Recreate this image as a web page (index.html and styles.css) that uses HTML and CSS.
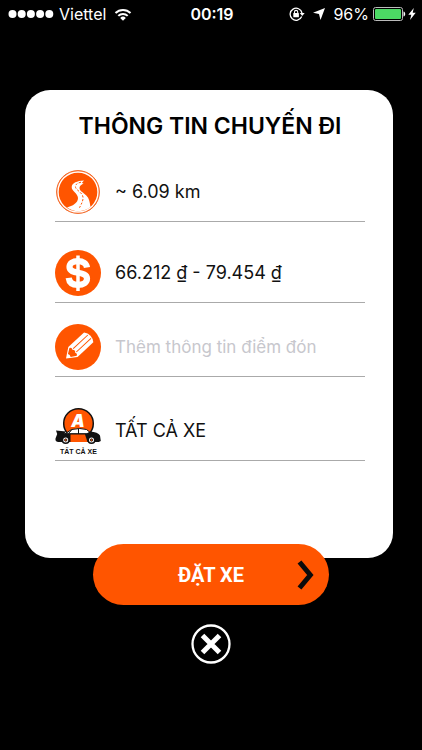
FILE: index.html
```html
<!DOCTYPE html>
<html lang="vi">
<head>
<meta charset="utf-8">
<meta name="viewport" content="width=device-width, initial-scale=1">
<title>Thông tin chuyến đi</title>
<link rel="stylesheet" href="styles.css">
</head>
<body>
<header class="status">
  <div class="status-side">
    <svg width="46" height="10" viewBox="0 0 46 10" fill="#fff" aria-hidden="true"><circle cx="4.500" cy="5" r="4"/><circle cx="13.700" cy="5" r="4"/><circle cx="22.900" cy="5" r="4"/><circle cx="32.100" cy="5" r="4"/><circle cx="41.300" cy="5" r="4"/></svg>
    <span class="carrier">Viettel</span>
    <svg class="wifi" width="18" height="13" viewBox="0 0 18 13" fill="none" stroke="#fff" stroke-width="2" aria-hidden="true"><path d="M1.500 5a10.600 10.600 0 0 1 15 0M4.300 7.900a6.600 6.600 0 0 1 9.400 0"/><path fill="#fff" stroke="none" d="M6.200 9.900a4 4 0 0 1 5.600 0L9 12.700z"/></svg>
  </div>
  <time class="clock">00:19</time>
  <div class="status-side status-right">
    <svg width="16" height="14" viewBox="0 0 16 14" aria-hidden="true"><path d="M12.700 9.500A6 6 0 1 1 13 6" fill="none" stroke="#fff" stroke-width="1.300"/><path d="M10.700 6h5L13.200 9z" fill="#fff"/><rect x="4.300" y="6" width="5.600" height="4.200" rx=".5" fill="#fff"/><path d="M5.500 6.300V5a1.600 1.600 0 0 1 3.200 0v1.300" fill="none" stroke="#fff" stroke-width="1.100"/></svg>
    <svg class="locate" width="12" height="12" viewBox="0 0 12 12" fill="#fff" aria-hidden="true"><path d="M12 0 7.500 12 6 6 0 4.800z"/></svg>
    <span class="percent">96%</span>
    <svg width="33" height="14" viewBox="0 0 33 14" aria-hidden="true"><rect x=".5" y=".5" width="29" height="13" rx="2" fill="#000" stroke="#bbb"/><rect x="2" y="2" width="26" height="10" rx="1" fill="#4cd964"/><path d="M30.500 4.500c2.300.5 2.300 4.500 0 5z" fill="#fff"/></svg>
    <svg class="bolt" width="8" height="12" viewBox="0 0 8 12" fill="#fff" aria-hidden="true"><path d="M5.800 0 .3 6.800h3L2 12l5.700-7.200h-3z"/></svg>
  </div>
</header>

<main class="page">
  <section class="card">
    <h1 class="title">THÔNG TIN CHUYẾN ĐI</h1>

    <div class="row">
      <svg class="icon" viewBox="0 0 46 46" aria-hidden="true">
        <circle cx="23" cy="23" r="21.400" fill="#ff5500" stroke="#f26a2c" stroke-width="1"/>
        <circle cx="23" cy="23" r="20" fill="none" stroke="#fff" stroke-width="1.400"/>
        <path fill="#fff" d="M29 11.500c-7 .3-12 2.500-12.300 6.500-.3 4 6.300 6.500 6.300 11 0 5-5.500 8-11 9.500A19.500 19.500 0 0 0 35.500 38c-.8-5-1.200-8.500-4.200-11.500-3-3-6.800-4.500-6.800-7.500 0-2.500 2.500-3.300 4-4.500l-1.700-.5z"/>
        <path fill="none" stroke="#ff5500" stroke-width="1" stroke-dasharray="2.200 1.600" d="M26 13.200c-3.500.8-6 2.300-5.500 5 .6 3 7 5.300 7.500 10 .3 3.300-1.200 6-3.500 10.500"/>
      </svg>
      <span class="value">~ 6.09 km</span>
    </div>

    <div class="row row-price">
      <svg class="icon" viewBox="0 0 46 46" aria-hidden="true">
        <circle cx="23" cy="23" r="23" fill="#ff5500"/>
        <path fill="none" stroke="#fff" stroke-width="6.200" d="M32 17.500c-.6-4-4-6.300-9-6.300-5.500 0-8.500 2.300-8.500 5.900 0 8 17.500 3.400 17.500 11.400 0 4-3.500 6.300-9 6.300s-8.800-2.600-9.300-7"/>
        <path stroke="#fff" stroke-width="3.500" d="M23 5.500v35.500"/>
      </svg>
      <span class="value">66.212 ₫ - 79.454 ₫</span>
    </div>

    <label class="row row-note">
      <svg class="icon" viewBox="0 0 46 46" aria-hidden="true">
        <circle cx="23" cy="23" r="23" fill="#ff5500"/>
        <g transform="translate(11 34.500) rotate(-43)">
          <path fill="#fff" d="M0 0 9.500-6.800H31q2.500 3 2.500 6.800T31 6.800H9.500z"/>
          <path fill="#ff5500" d="M4.500-2 9.700-5.400q2.300 1.400 1 3.400 2.300 2 0 4 1.300 2-1 3.400L4.500 2q1.200-2 0-4z"/>
          <path fill="none" stroke="#ff5500" stroke-width="1" d="M12-2.300h20M12 2.300h20"/>
        </g>
      </svg>
      <input class="value note" type="text" placeholder="Thêm thông tin điểm đón" aria-label="Thêm thông tin điểm đón">
    </label>

    <div class="row row-car">
      <svg class="icon" viewBox="0 0 46 46" aria-hidden="true">
        <circle cx="23.500" cy="15.500" r="14.800" fill="#ff5500" stroke="#111" stroke-width="1.500"/>
        <text x="23" y="19" class="badge-letter">A</text>
        <path fill="#fff" stroke="#111" stroke-width="1" d="M10 26 16.500 21.500q9-2 15 0l5.500 4.500z"/>
        <path fill="#111" d="M1 22.500 11 23.500 9.500 25.300H32l3-1.800q8 .5 10 4l.8 5.500-2 1H3q-3-.5-2.500-3.500L2.200 26z"/>
        <path fill="#ff5500" d="M15.500 26.500H30l2.500 7.500H15.500z"/>
        <path stroke="#111" stroke-width="1" d="M23.500 21v5M17 21.500l-3.500 4"/>
        <g fill="#fff" stroke="#111" stroke-width="1.600"><circle cx="10.700" cy="32" r="3.300"/><circle cx="36.500" cy="32" r="3.300"/></g>
        <g fill="#ff5500" stroke="#111" stroke-width=".8"><circle cx="10.700" cy="32" r="1.200"/><circle cx="36.500" cy="32" r="1.200"/></g>
        <text x="23.500" y="46" class="badge-caption">TẤT CẢ XE</text>
      </svg>
      <span class="value">TẤT CẢ XE</span>
    </div>
  </section>
</main>

<footer class="actions">
  <button class="book" type="button">
    <span class="book-label">ĐẶT XE</span>
    <svg class="chevron" width="18" height="32" viewBox="0 0 18 32" fill="none" stroke="#0b0b0b" stroke-width="5" aria-hidden="true"><path d="m2.500 3 10.800 13L2.500 29"/></svg>
  </button>

  <button class="close" type="button" aria-label="Đóng">
    <svg width="40" height="40" viewBox="0 0 40 40" fill="none" stroke="#fff" aria-hidden="true"><circle cx="20" cy="20" r="18.500" stroke-width="2.300"/><path stroke-width="5" d="m11.500 11.500 17 17m0-17-17 17"/></svg>
  </button>
</footer>
</body>
</html>
```
FILE: styles.css
```css
* {
  box-sizing: border-box;
}

body {
  margin: 0;
  min-height: 100vh;
  background: #000;
  color: #111;
  font-family: Inter, "Liberation Sans", sans-serif;
}

button {
  border: 0;
  padding: 0;
  background: none;
  cursor: pointer;
}

svg {
  display: block;
  flex: none;
}

.status {
  display: grid;
  grid-template-columns: 1fr auto 1fr;
  align-items: center;
  height: 28px;
  padding: 0 6px 0 8px;
  color: #fff;
  font-size: 16px;
  line-height: 20px;
}

.status-side {
  display: flex;
  align-items: center;
}

.status-right {
  justify-content: flex-end;
}

.carrier {
  margin: 0 8px 0 5px;
}

.clock {
  font-weight: 600;
}

.locate {
  margin: 0 8px;
}

.percent {
  margin-right: 4px;
}

.bolt {
  margin-left: 2px;
}

.page {
  padding: 62px 29px 0 25px;
}

.card {
  padding: 20px 28px 97px 30px;
  border-radius: 25px;
  background: #fff;
}

.title {
  margin: 0 0 27px;
  color: #000;
  font-size: 23px;
  font-weight: 600;
  line-height: 32px;
  text-align: center;
}

.row {
  display: flex;
  align-items: center;
  gap: 14px;
  padding-bottom: 6px;
  border-bottom: 1px solid #aaa;
}

.row-price {
  margin-top: 28px;
}

.row-note {
  margin-top: 21px;
}

.row-car {
  margin-top: 31px;
}

.icon {
  width: 46px;
  height: 46px;
  overflow: visible;
}

.value {
  flex: 1;
  min-width: 0;
  font-size: 18px;
  line-height: 24px;
}

.note {
  padding: 0;
  border: 0;
  outline: 0;
  background: none;
  color: #111;
  font-family: inherit;
  font-size: 17px;
}

.note::placeholder {
  color: #c7c7cd;
  opacity: 1;
}

.badge-letter {
  fill: #fff;
  font: italic 900 17px Inter, sans-serif;
  text-anchor: middle;
}

.badge-caption {
  fill: #111;
  font: 700 7px "Liberation Sans", sans-serif;
  text-anchor: middle;
}

.actions {
  display: flex;
  flex-direction: column;
  align-items: center;
  gap: 19px;
  margin-top: -14px;
  padding-bottom: 24px;
}

.book {
  display: grid;
  grid-template-columns: 1fr auto 1fr;
  align-items: center;
  width: 56%;
  height: 61px;
  padding: 0 14px;
  border-radius: 31px;
  background: #ff5500;
  color: #fff;
}

.book-label {
  grid-column: 2;
  font-family: Roboto, sans-serif;
  font-size: 20px;
  font-weight: 700;
  line-height: 28px;
}

.chevron {
  justify-self: end;
}
```
